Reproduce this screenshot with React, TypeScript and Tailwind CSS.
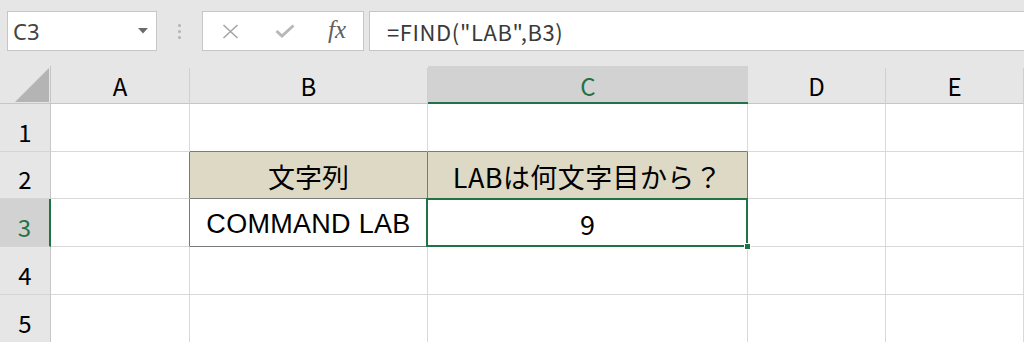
import React from "react";

type CellProps = {
  children?: React.ReactNode;
  className?: string;
};

function Cell({ children, className = "" }: CellProps) {
  return (
    <div className={`flex items-center justify-center border-r border-b ${className}`}>
      {children}
    </div>
  );
}

export default function App() {
  const jp = { fontFamily: '"Noto Sans CJK JP", "Noto Sans", sans-serif' };
  return (
    <div className="w-[1024px] h-[342px] overflow-hidden bg-white" style={jp}>
      {/* Toolbar */}
      <div className="h-[66px] bg-[#e6e6e6] flex items-start pt-[11px] pl-[7px]">
        <div className="w-[150px] h-[40px] bg-white border border-[#c6c6c6] flex items-center justify-between pl-[5px] pr-[8px]">
          <span className="text-[22px] text-[#444] leading-none" style={{ fontFamily: '"Noto Sans", sans-serif' }}>C3</span>
          <svg width="10" height="6" viewBox="0 0 10 6"><path d="M0 0 H10 L5 5.5 Z" fill="#6b6b6b" /></svg>
        </div>
        <div className="w-[45px] h-[40px] flex flex-col items-center justify-center gap-[3px] pt-[1px]">
          <span className="w-[3px] h-[3px] rounded-full bg-[#b3b3b3]" />
          <span className="w-[3px] h-[3px] rounded-full bg-[#b3b3b3]" />
          <span className="w-[3px] h-[3px] rounded-full bg-[#b3b3b3]" />
        </div>
        <div className="w-[162px] h-[40px] bg-white border border-[#c6c6c6] flex items-center pl-[19px]">
          <svg width="17" height="15" viewBox="0 0 17 15">
            <path d="M1.5 1 L15.5 14 M15.5 1 L1.5 14" stroke="#a6a6a6" strokeWidth="1.6" fill="none" />
          </svg>
          <svg className="ml-[36px]" width="20" height="14" viewBox="0 0 20 14">
            <path d="M1.5 7 L7 12 L18.5 1.5" stroke="#b8b8b8" strokeWidth="3" fill="none" />
          </svg>
          <span
            className="ml-[33px] text-[25px] italic text-[#606060] leading-none -mt-[3px]"
            style={{ fontFamily: '"Liberation Serif", "DejaVu Serif", serif' }}
          >
            fx
          </span>
        </div>
        <div className="flex-1 ml-[5px] h-[40px] bg-white border border-r-0 border-[#c6c6c6] flex items-center pl-[17px]">
          <span className="text-[22px] text-[#3a3a3a] leading-none tracking-[0.6px]">=FIND("LAB",B3)</span>
        </div>
      </div>

      {/* Grid */}
      <div
        className="grid"
        style={{
          gridTemplateColumns: "51px 139px 238px 320px 138px 138px",
          gridTemplateRows: "38px 48px 47px 48px 48px 48px",
        }}
      >
        {/* header row */}
        <div className="bg-[#e6e6e6] border-r border-b border-[#c6c6c6] flex items-end justify-end pr-[1px] pb-[1px]">
          <svg width="34" height="34" viewBox="0 0 34 34"><path d="M34 0 V34 H0 Z" fill="#b4b4b4" /></svg>
        </div>
        {["A", "B"].map((c) => (
          <div key={c} className="bg-[#e6e6e6] border-b border-[#c6c6c6] flex items-center justify-center text-[24px] text-black pt-[2px]">
            <div className="w-full flex justify-center border-r border-[#cfcfcf]">{c}</div>
          </div>
        ))}
        <div className="bg-[#d2d2d2] border-b-2 border-[#217346] flex items-center justify-center text-[24px] text-[#217346] pt-[3px]">C</div>
        {["D", "E"].map((c) => (
          <div key={c} className="bg-[#e6e6e6] border-b border-[#c6c6c6] flex items-center justify-center text-[24px] text-black pt-[2px]">
            <div className="w-full flex justify-center border-r border-[#cfcfcf]">{c}</div>
          </div>
        ))}

        {/* row 1 */}
        <div className="bg-[#e6e6e6] border-r border-b border-[#c6c6c6] border-b-[#d4d4d4] flex items-center justify-center text-[24px] pt-[8px]">1</div>
        <Cell className="border-[#d9d9d9]" />
        <Cell className="border-[#d9d9d9] border-b-[#7a7a7a]" />
        <Cell className="border-[#d9d9d9] border-b-[#7a7a7a]" />
        <Cell className="border-[#d9d9d9]" />
        <Cell className="border-[#d9d9d9]" />

        {/* row 2 */}
        <div className="bg-[#e6e6e6] border-r border-b border-[#c6c6c6] border-b-[#d4d4d4] flex items-center justify-center text-[24px] pt-[8px]">2</div>
        <Cell className="border-[#d9d9d9] border-r-[#7a7a7a]" />
        <Cell className="border-[#7a7a7a] bg-[#ddd9c4] text-[27px] text-black pt-[4px]">文字列</Cell>
        <Cell className="border-[#7a7a7a] bg-[#ddd9c4] text-[27px] text-black pt-[4px] tracking-[0.4px]">LABは何文字目から？</Cell>
        <Cell className="border-[#d9d9d9]" />
        <Cell className="border-[#d9d9d9]" />

        {/* row 3 */}
        <div className="bg-[#d2d2d2] border-r-2 border-r-[#217346] border-b border-b-[#d4d4d4] flex items-center justify-center text-[24px] text-[#217346] pt-[8px]">3</div>
        <Cell className="border-[#d9d9d9] border-r-[#7a7a7a]" />
        <Cell className="border-[#7a7a7a] text-[27px] text-black pt-[3px]">
          <span style={{ fontFamily: '"Liberation Sans", Arial, sans-serif' }} className="tracking-[0.3px]">COMMAND LAB</span>
        </Cell>
        <div className="relative flex items-center justify-center border-r border-b border-[#7a7a7a] text-[27px] text-black pt-[4px]">
          9
          <div className="absolute -left-[2px] -top-[1px] -right-[1px] -bottom-[1px] border-2 border-[#217346]" />
          <div className="absolute -right-[4px] -bottom-[4px] w-[7px] h-[7px] bg-[#217346] border border-white" />
        </div>
        <Cell className="border-[#d9d9d9]" />
        <Cell className="border-[#d9d9d9]" />

        {/* row 4 */}
        <div className="bg-[#e6e6e6] border-r border-b border-[#c6c6c6] border-b-[#d4d4d4] flex items-center justify-center text-[24px] pt-[8px]">4</div>
        <Cell className="border-[#d9d9d9]" />
        <Cell className="border-[#d9d9d9]" />
        <Cell className="border-[#d9d9d9]" />
        <Cell className="border-[#d9d9d9]" />
        <Cell className="border-[#d9d9d9]" />

        {/* row 5 */}
        <div className="bg-[#e6e6e6] border-r border-b border-[#c6c6c6] border-b-[#d4d4d4] flex items-center justify-center text-[24px] pt-[8px]">5</div>
        <Cell className="border-[#d9d9d9]" />
        <Cell className="border-[#d9d9d9]" />
        <Cell className="border-[#d9d9d9]" />
        <Cell className="border-[#d9d9d9]" />
        <Cell className="border-[#d9d9d9]" />
      </div>
    </div>
  );
}
